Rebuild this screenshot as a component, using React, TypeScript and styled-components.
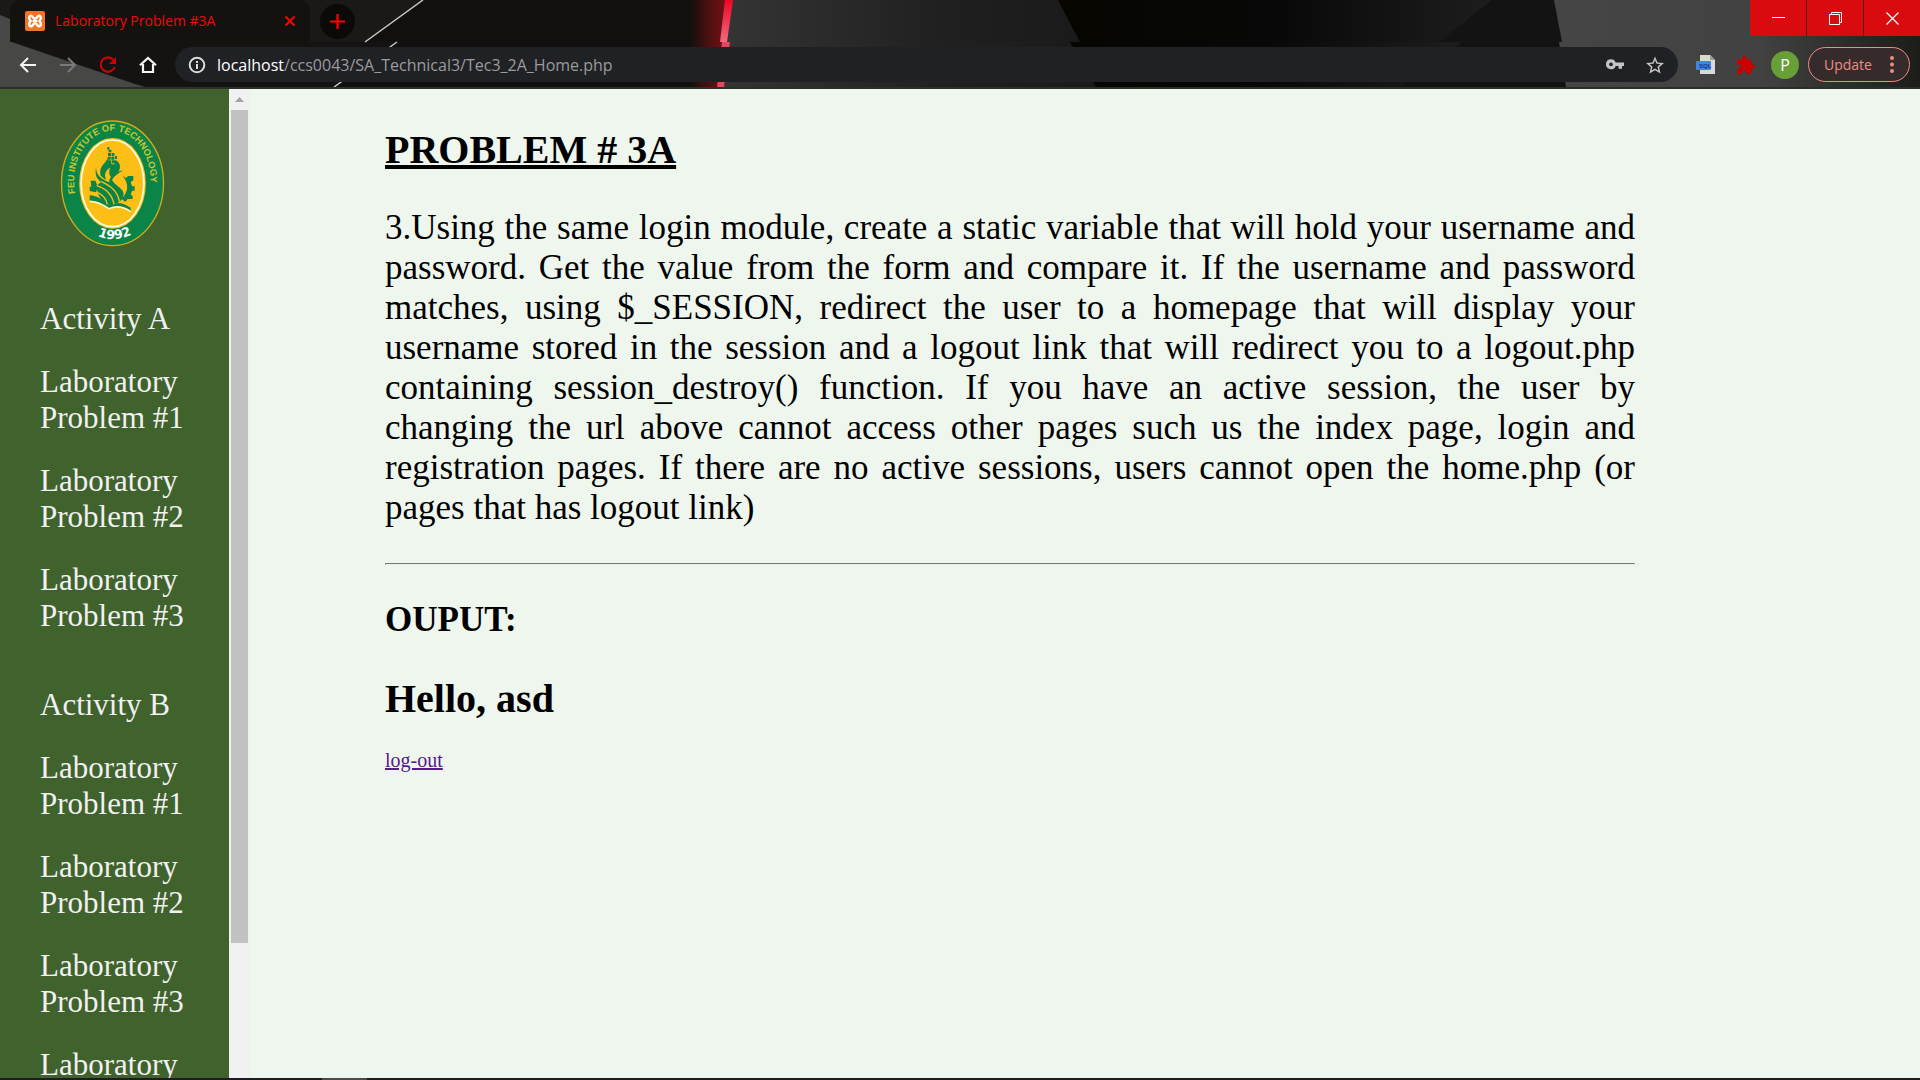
import React from "react";
import styled, { createGlobalStyle } from "styled-components";

const GlobalStyle = createGlobalStyle`
  *, *::before, *::after { box-sizing: border-box; }
  body { margin: 0; background: #eff6ee; }
  button { border: 0; padding: 0; background: none; font: inherit; color: inherit; cursor: pointer; }
  svg { display: block; flex: none; }
`;

const uiFont = `"Open Sans", "Noto Sans", sans-serif`;
const pageFont = `"Liberation Serif", "Times New Roman", serif`;

const Window = styled.div`
  display: flex;
  flex-direction: column;
  height: 100vh;
  overflow: hidden;
`;

/* ---------- browser chrome ---------- */

const Chrome = styled.header`
  position: relative;
  flex: none;
  border-bottom: 2px solid #2d2d2c;
  background: #12110f;
  font-family: ${uiFont};
`;

const Backdrop = styled.svg`
  position: absolute;
  inset: 0;
  width: 100%;
  height: 100%;
`;

const TabStrip = styled.div`
  position: relative;
  display: flex;
  align-items: flex-start;
  height: 42px;
  padding-left: 10px;
`;

const Tab = styled.div`
  display: flex;
  align-items: center;
  width: 300px;
  height: 42px;
  padding: 0 14px 0 15px;
  border-radius: 10px 10px 0 0;
  background: #13120f;
`;

const TabTitle = styled.button`
  display: flex;
  flex: 1;
  align-items: center;
  gap: 10px;
  color: #f40606;
  font-size: 14px;
  line-height: 20px;
  white-space: nowrap;
`;

const IconButton = styled.button<{ $size: number }>`
  display: flex;
  flex: none;
  align-items: center;
  justify-content: center;
  width: ${(p) => p.$size}px;
  height: ${(p) => p.$size}px;
  border-radius: 50%;
`;

const NewTab = styled(IconButton)`
  margin: 4px 0 0 10px;
  background: #0b0a09;
`;

const WindowControls = styled.div`
  display: flex;
  gap: 1px;
  margin-left: auto;
  background: #5c1a1b;
`;

const WindowButton = styled.button`
  display: flex;
  align-items: center;
  justify-content: center;
  width: 56px;
  height: 36px;
  background: #d90b0e;
`;

const Toolbar = styled.div`
  position: relative;
  display: flex;
  align-items: center;
  height: 45px;
  padding: 0 10px 0 8px;
`;

const NavButtons = styled.nav`
  display: flex;
  width: 167px;
`;

const AddressBar = styled.form`
  display: flex;
  flex: 1;
  align-items: center;
  height: 35px;
  padding: 0 3px 0 13px;
  border-radius: 18px;
  background: #202124;
  font-size: 16px;
`;

const Host = styled.label`
  margin-left: 11px;
  color: #ffffff;
  line-height: 24px;
`;

const Address = styled.input`
  flex: 1;
  min-width: 0;
  height: 24px;
  padding: 0;
  border: 0;
  outline: 0;
  background: transparent;
  color: #9a9b9d;
  font: inherit;
`;

const Extensions = styled.div`
  display: flex;
  align-items: center;
  margin-left: 8px;
`;

const Avatar = styled.button`
  width: 28px;
  height: 28px;
  margin: 0 9px 0 5px;
  border-radius: 50%;
  background: #689f38;
  color: #ffffff;
  font-size: 16px;
  line-height: 28px;
`;

const UpdateButton = styled.button`
  display: flex;
  align-items: center;
  justify-content: space-between;
  width: 102px;
  height: 35px;
  padding: 0 15px;
  border: 1px solid #f28b82;
  border-radius: 18px;
  background: #352b2b;
  color: #f28b82;
  font-size: 14px;
`;

/* ---------- web page ---------- */

const Page = styled.div`
  display: flex;
  flex: 1;
  min-height: 0;
  background: #eff6ee;
  font-family: ${pageFont};
`;

const Sidebar = styled.aside`
  flex: none;
  width: 229px;
  overflow: hidden;
  padding-top: 30px;
  background: #40622d;
`;

const LogoLink = styled.a`
  display: block;
  padding-left: 60px;
`;

const NavGroup = styled.ul`
  display: flex;
  flex-direction: column;
  gap: 27px;
  margin: 53px 0 0;
  padding: 0 32px 0 40px;
  list-style: none;
`;

const NavLink = styled.a`
  display: block;
  color: #f1f1f1;
  font-size: 31px;
  line-height: 36px;
  text-decoration: none;
`;

const ScrollTrack = styled.div`
  display: flex;
  flex: none;
  flex-direction: column;
  width: 21px;
  padding: 0 2px;
  background: #f1f1f1;
`;

const ScrollArrow = styled.button`
  display: flex;
  align-items: center;
  justify-content: center;
  height: 21px;
`;

const ScrollThumb = styled.div`
  flex: 833;
  background: #c1c1c1;
`;

const ScrollRest = styled.div`
  flex: 135;
`;

const Content = styled.main`
  flex: 1;
  min-width: 0;
  padding: 38px 285px 0 135px;
  color: #000000;
`;

const Title = styled.h1<{ $underlined?: boolean }>`
  margin: 0;
  font-size: 40px;
  line-height: 46px;
  text-decoration: ${(p) => (p.$underlined ? "underline" : "none")};
`;

const Problem = styled.p`
  margin: 35px 0;
  font-size: 35px;
  line-height: 40px;
  text-align: justify;
`;

const Rule = styled.hr`
  margin: 0;
  border: 1px inset #cccccc;
  border-bottom-color: #eeeeee;
`;

const OutputLabel = styled.h2`
  margin: 35px 0 36px;
  font-size: 35px;
  line-height: 40px;
`;

const Logout = styled.a`
  display: inline-block;
  margin-top: 27px;
  color: #551a8b;
  font-size: 20px;
  line-height: 23px;
`;

const TaskbarEdge = styled.footer`
  display: flex;
  flex: none;
  height: 2px;
  padding-left: 322px;
  background: #1c1c22;
`;

const TaskbarItem = styled.div`
  width: 45px;
  background: #4a4a50;
`;

const ThemeArt = () => (
  <Backdrop viewBox="0 0 1920 87" preserveAspectRatio="none" aria-hidden="true">
    <defs>
      <linearGradient id="steel">
        <stop offset="0" stopColor="#343434" />
        <stop offset="0.6" stopColor="#202020" />
        <stop offset="1" stopColor="#1a1a1a" />
      </linearGradient>
      <linearGradient id="void">
        <stop offset="0" stopColor="#060500" />
        <stop offset="0.5" stopColor="#080808" />
        <stop offset="1" stopColor="#1d1d1d" />
      </linearGradient>
      <linearGradient id="glow">
        <stop offset="0" stopColor="#5a0f10" stopOpacity="0" />
        <stop offset="0.6" stopColor="#5a0f10" />
        <stop offset="1" stopColor="#75101a" />
      </linearGradient>
      <linearGradient id="neon" x2="0" y2="1">
        <stop offset="0" stopColor="#ee0522" />
        <stop offset="1" stopColor="#ef6b80" />
      </linearGradient>
      <linearGradient id="slate">
        <stop offset="0" stopColor="#454545" />
        <stop offset="0.55" stopColor="#424242" />
        <stop offset="1" stopColor="#1c1c19" />
      </linearGradient>
    </defs>
    <rect width="1920" height="87" fill="#11100e" />
    <path d="M0 0H423L365 42H0Z" fill="#1a1918" />
    <path d="M0 15 10 19V42H0Z" fill="#484848" />
    <path d="M0 42H397L334 87H0Z" fill="#141312" />
    <path d="M0 38 132 83 145 87H0Z" fill="#474746" />
    <path d="M423 0 365 42M397 42 334 87" stroke="#c8c8c8" strokeWidth="1.5" />
    <rect x="690" width="38" height="87" fill="url(#glow)" />
    <path d="M731 0H1058L1080 42H726Z" fill="url(#steel)" />
    <path d="M728 42H1070L1096 87H722Z" fill="url(#steel)" />
    <path d="M725 0H733L727 42H720Z" fill="url(#neon)" />
    <path d="M722 42H730L724 87H717Z" fill="#e8455e" />
    <path d="M1058 0H1492L1440 42H1080Z" fill="url(#void)" />
    <path d="M1070 42H1462L1400 87H1096Z" fill="url(#void)" />
    <path d="M1492 0H1554L1562 42H1440Z" fill="#131313" />
    <path d="M1462 42H1559L1566 87H1400Z" fill="#121212" />
    <path d="M1554 0H1920V42H1562Z" fill="url(#slate)" />
    <path d="M1559 42H1920V87H1566Z" fill="url(#slate)" />
  </Backdrop>
);

const Favicon = () => (
  <svg width="20" height="20" viewBox="0 0 20 20" aria-hidden="true">
    <rect width="20" height="20" rx="2" fill="#f37423" />
    <path
      d="M7 5.2C4.5 3.4 2.9 7.4 5.6 10 2.9 12.6 4.5 16.6 7.2 14.9 8.4 13.7 8 12.4 10 12.4S11.6 13.7 12.8 14.9C15.5 16.6 17.1 12.6 14.4 10 17.1 7.4 15.5 3.4 13 5.2 11.7 6.3 12 7.6 10 7.6S8.3 6.3 7 5.2ZM8.6 10H11.4"
      fill="none" stroke="#fff" strokeWidth="2.4" strokeLinecap="round"
    />
  </svg>
);

const SchoolLogo = () => (
  <svg width="105" height="129" viewBox="60 86 315 387" role="img" aria-label="FEU Institute of Technology">
    <defs>
      <path id="nameArc" d="M105 309A115 153 0 1 1 329 309" />
      <path id="yearArc" d="M152 424Q217 470 296 421" />
    </defs>
    <ellipse cx="217.500" cy="279" rx="153" ry="187" fill="#0a8547" stroke="#cfae1c" strokeWidth="4" />
    <ellipse cx="217.500" cy="279" rx="96" ry="132" fill="#fdbe16" stroke="#f0c32a" strokeWidth="8" />
    <ellipse cx="217.500" cy="279" rx="94" ry="130" fill="#fdbe16" stroke="#fffbe8" strokeWidth="5" />
    <text fill="#c9c52c" fontFamily="Liberation Sans, sans-serif" fontSize="28" fontWeight="700">
      <textPath href="#nameArc">FEU INSTITUTE OF TECHNOLOGY</textPath>
    </text>
    <text fill="#fff" fontFamily="DejaVu Sans, sans-serif" fontSize="38" fontWeight="700" textAnchor="middle">
      <textPath href="#yearArc" startOffset="50%">1992</textPath>
    </text>
    <g fill="#0a8547">
      <path d="M202 170h6v8h-6zM206 178h8v8h-8zM204 188h9v9h-9zM215 188h8v9h-8zM203 199h9v9h-9zM214 199h9v9h-9zM225 197h6v9h-6zM206 210h8v9h-8zM216 210h9v9h-9z" />
      <path d="M152 271H166L174 290 168 306 149 302V289H154ZM247 256 258 263 264 257H280V270L272 275 276 288H284V301H277L272 312 278 318V326H263L256 335 244 325C267 305 267 277 247 256Z" />
      <path d="M149 315C171 316 190 328 207 345 228 333 250 337 272 352V363C250 348 230 345 207 355 190 341 171 331 149 331Z" />
      <g transform="translate(132 156)">
        <path d="M70 50C62 66 46 70 49 98 54 104 60 110 66 112 60 96 64 84 78 76 74 90 76 100 82 104 92 98 108 92 108 72 108 62 100 56 94 52L92 66 84 66Z" />
        <path d="M36 76C32 100 40 112 52 118L38 130C40 160 52 178 76 188 104 186 122 172 118 150 114 135 92 130 84 112 92 100 104 92 118 84 92 88 74 104 76 120 60 112 38 106 36 76Z" />
      </g>
    </g>
    <g transform="translate(132 156)" fill="none" stroke="#fdbe16" strokeWidth="4">
      <path d="M52 118C72 128 102 142 106 178M38 130C64 138 84 155 90 186M40 150C54 156 66 168 70 186" />
    </g>
    <path d="M149 333C171 333 190 344 207 355 230 345 250 348 272 364" fill="none" stroke="#fff4c0" strokeWidth="5" />
  </svg>
);

const activities = [
  { name: "Activity A", labs: [1, 2, 3] },
  { name: "Activity B", labs: [1, 2, 3, 4] },
];

export default function App() {
  return (
    <Window>
      <GlobalStyle />
      <Chrome>
        <ThemeArt />
        <TabStrip>
          <Tab>
            <TabTitle>
              <Favicon />
              Laboratory Problem #3A
            </TabTitle>
            <IconButton $size={12} aria-label="Close tab">
              <svg width="12" height="12" viewBox="0 0 12 12" stroke="#f40606" strokeWidth="2">
                <path d="M1.500 1.500 10.500 10.500M10.500 1.500 1.500 10.500" />
              </svg>
            </IconButton>
          </Tab>
          <NewTab $size={35} aria-label="New tab">
            <svg width="15" height="15" viewBox="0 0 15 15" stroke="#ff0000" strokeWidth="2.2">
              <path d="M7.500 0V15M0 7.500H15" />
            </svg>
          </NewTab>
          <WindowControls>
            <WindowButton aria-label="Minimize">
              <svg width="13" height="13" viewBox="0 0 13 13" stroke="#fff">
                <path d="M0 5.500H13" />
              </svg>
            </WindowButton>
            <WindowButton aria-label="Restore">
              <svg width="13" height="13" viewBox="0 0 13 13" fill="none" stroke="#fff">
                <path d="M.5 2.500h10v10H.5zM2.500 2V.5h10v10H11" />
              </svg>
            </WindowButton>
            <WindowButton aria-label="Close">
              <svg width="13" height="13" viewBox="0 0 13 13" stroke="#fff" strokeWidth="1.2">
                <path d="M.5.5 12.500 12.500M12.500.5.5 12.500" />
              </svg>
            </WindowButton>
          </WindowControls>
        </TabStrip>
        <Toolbar>
          <NavButtons>
            <IconButton $size={40} aria-label="Back">
              <svg width="18" height="16" viewBox="0 0 18 16" fill="none" stroke="#f4f4f4" strokeWidth="2">
                <path d="M17 8H2M9 1 2 8l7 7" />
              </svg>
            </IconButton>
            <IconButton $size={40} aria-label="Forward">
              <svg width="18" height="16" viewBox="0 0 18 16" fill="none" stroke="#7a7a7a" strokeWidth="2">
                <path d="M1 8h15M9 1l7 7-7 7" />
              </svg>
            </IconButton>
            <IconButton $size={40} aria-label="Reload">
              <svg width="18" height="18" viewBox="0 0 18 18" fill="none" stroke="#c90404" strokeWidth="2.2">
                <path d="M14.500 4A7.200 7.200 0 1 0 15.700 11" />
                <path d="M17 1V8H10Z" fill="#c90404" stroke="none" />
              </svg>
            </IconButton>
            <IconButton $size={40} aria-label="Home">
              <svg width="18" height="18" viewBox="0 0 18 18" fill="none" stroke="#f4f4f4" strokeWidth="2.2">
                <path d="M1 9.300 9 2l8 7.300M4 8V16H14V8" />
              </svg>
            </IconButton>
          </NavButtons>
          <AddressBar onSubmit={(e) => e.preventDefault()}>
            <svg width="18" height="18" viewBox="0 0 18 18" fill="none" stroke="#dcdcdc" strokeWidth="2" aria-hidden="true">
              <circle cx="9" cy="9" r="7.300" />
              <path d="M9 8V13M9 5V7" />
            </svg>
            <Host htmlFor="address">localhost</Host>
            <Address id="address" defaultValue="/ccs0043/SA_Technical3/Tec3_2A_Home.php" spellCheck={false} />
            <IconButton type="button" $size={40} aria-label="Saved passwords">
              <svg width="18" height="18" viewBox="0 0 18 18" aria-hidden="true">
                <path
                  fillRule="evenodd"
                  fill="#c4c4c4"
                  d="M5 3.200a5 5 0 1 0 4.700 6.700H12.500V12.800H16V9.900H18V6.600H9.700A5 5 0 0 0 5 3.200ZM5 6.400a1.900 1.900 0 1 1 0 3.800 1.900 1.900 0 0 1 0-3.800Z"
                />
              </svg>
            </IconButton>
            <IconButton type="button" $size={40} aria-label="Bookmark this tab">
              <svg width="18" height="18" viewBox="2 2 20 19" fill="#c4c4c4" aria-hidden="true">
                <path d="m22 9.240-7.190-.62L12 2 9.190 8.630 2 9.240l5.460 4.730L5.820 21 12 17.270 18.180 21l-1.630-7.030L22 9.240zM12 15.400l-3.760 2.270 1-4.280-3.320-2.880 4.380-.38L12 6.100l1.710 4.040 4.380.38-3.320 2.880 1 4.280L12 15.400z" />
              </svg>
            </IconButton>
          </AddressBar>
          <Extensions>
            <IconButton $size={40} aria-label="SQL extension">
              <svg width="20" height="19" viewBox="0 0 20 19">
                <path d="M4 0H14L19 5V19H4Z" fill="#d9d9d9" />
                <path d="M14 0 19 5H14Z" fill="#9c9c9c" />
                <rect y="6" width="15" height="9" rx="1" fill="#4384e0" />
                <text x="3" y="13" fontSize="6" fontWeight="700" fontFamily="Liberation Sans, sans-serif" fill="#173a78">SQL</text>
              </svg>
            </IconButton>
            <IconButton $size={40} aria-label="Extensions">
              <svg width="18" height="18" viewBox="2 1 21 21" fill="#c90000">
                <path d="M20.500 11H19V7c0-1.100-.9-2-2-2h-4V3.500a2.500 2.500 0 0 0-5 0V5H4c-1.100 0-2 .9-2 2v3.800h1.500a2.700 2.700 0 0 1 0 5.400H2V20c0 1.100.9 2 2 2h3.800v-1.500a2.700 2.700 0 0 1 5.400 0V22H17c1.100 0 2-.9 2-2v-4h1.500a2.500 2.500 0 0 0 0-5z" />
              </svg>
            </IconButton>
            <Avatar aria-label="Profile P">P</Avatar>
            <UpdateButton>
              Update
              <svg width="4" height="17" viewBox="0 0 4 17" fill="#f28b82" aria-hidden="true">
                <circle cx="2" cy="2" r="2" />
                <circle cx="2" cy="8.500" r="2" />
                <circle cx="2" cy="15" r="2" />
              </svg>
            </UpdateButton>
          </Extensions>
        </Toolbar>
      </Chrome>

      <Page>
        <Sidebar>
          <LogoLink href="#home">
            <SchoolLogo />
          </LogoLink>
          {activities.map((activity) => (
            <NavGroup key={activity.name}>
              <li>
                <NavLink href="#activity">{activity.name}</NavLink>
              </li>
              {activity.labs.map((n) => (
                <li key={n}>
                  <NavLink href={`#lab-${n}`}>{`Laboratory Problem #${n}`}</NavLink>
                </li>
              ))}
            </NavGroup>
          ))}
        </Sidebar>
        <ScrollTrack>
          <ScrollArrow aria-label="Scroll up">
            <svg width="9" height="5" viewBox="0 0 9 5" fill="#a3a3a3">
              <path d="M4.500 0 9 5H0Z" />
            </svg>
          </ScrollArrow>
          <ScrollThumb />
          <ScrollRest />
        </ScrollTrack>
        <Content>
          <Title $underlined>PROBLEM # 3A</Title>
          <Problem>
            3.Using the same login module, create a static variable that will hold your username and
            password. Get the value from the form and compare it. If the username and password matches,
            using $_SESSION, redirect the user to a homepage that will display your username stored in
            the session and a logout link that will redirect you to a logout.php containing
            session_destroy() function. If you have an active session, the user by changing the url
            above cannot access other pages such us the index page, login and registration pages. If
            there are no active sessions, users cannot open the home.php (or pages that has logout link)
          </Problem>
          <Rule />
          <OutputLabel>OUPUT:</OutputLabel>
          <Title>Hello, asd</Title>
          <Logout href="#logout">log-out</Logout>
        </Content>
      </Page>
      <TaskbarEdge>
        <TaskbarItem />
      </TaskbarEdge>
    </Window>
  );
}
